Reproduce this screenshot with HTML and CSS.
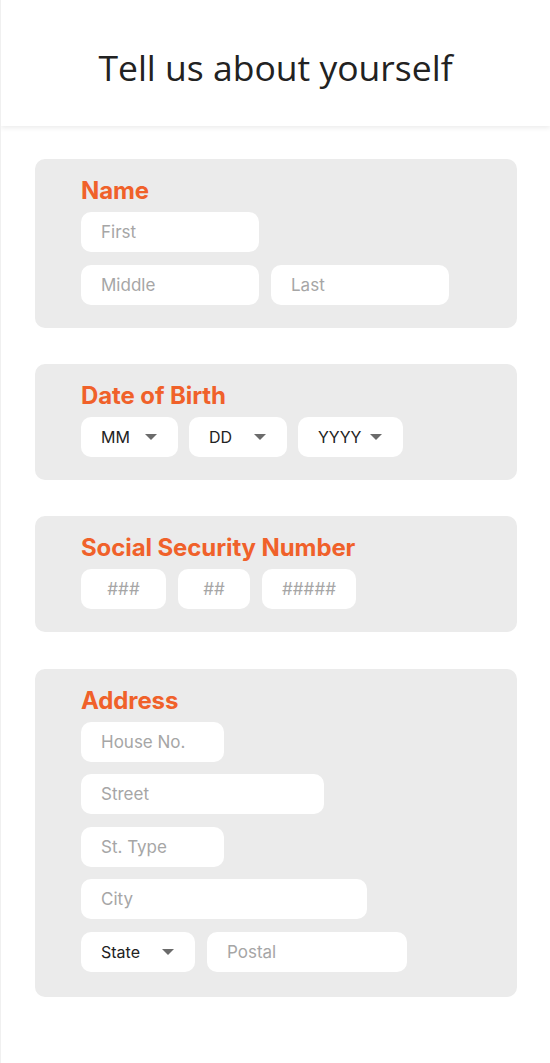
FILE: index.html
```html
<!DOCTYPE html>
<html lang="en">
<head>
    <meta charset="UTF-8">
    <meta name="viewport" content="width=device-width, initial-scale=1.0">
    <title>Tell us about yourself</title>
    <link rel="stylesheet" href="styles.css">
</head>
<body>
    <header class="topbar">
        <h1>Tell us about yourself</h1>
    </header>

    <main class="form">
        <section class="card">
            <h2 class="card-title">Name</h2>
            <div class="rows">
                <div class="row">
                    <input class="campo w-name" type="text" placeholder="First">
                </div>
                <div class="row">
                    <input class="campo w-name" type="text" placeholder="Middle">
                    <input class="campo w-name" type="text" placeholder="Last">
                </div>
            </div>
        </section>

        <section class="card">
            <h2 class="card-title">Date of Birth</h2>
            <div class="rows">
                <div class="row row-tight">
                    <div class="select w-month"><span>MM</span><span class="caret"></span></div>
                    <div class="select w-day"><span>DD</span><span class="caret"></span></div>
                    <div class="select w-year"><span>YYYY</span><span class="caret"></span></div>
                </div>
            </div>
        </section>

        <section class="card">
            <h2 class="card-title">Social Security Number</h2>
            <div class="rows">
                <div class="row">
                    <input class="campo centro w-ssn1" type="text" placeholder="###">
                    <input class="campo centro w-ssn2" type="text" placeholder="##">
                    <input class="campo centro w-ssn3" type="text" placeholder="#####">
                </div>
            </div>
        </section>

        <section class="card card-last">
            <h2 class="card-title">Address</h2>
            <div class="rows">
                <div class="row">
                    <input class="campo w-house" type="text" placeholder="House No.">
                </div>
                <div class="row">
                    <input class="campo w-street" type="text" placeholder="Street">
                </div>
                <div class="row">
                    <input class="campo w-house" type="text" placeholder="St. Type">
                </div>
                <div class="row">
                    <input class="campo w-city" type="text" placeholder="City">
                </div>
                <div class="row">
                    <div class="select w-state"><span>State</span><span class="caret"></span></div>
                    <input class="campo w-postal" type="text" placeholder="Postal">
                </div>
            </div>
        </section>
    </main>
</body>
</html>
```

FILE: styles.css
```css
body {
    margin: 0;
    background-color: #ffffff;
    border-left: 1px solid #f0f0f0;
    font-family: Inter, Roboto, sans-serif;
    min-height: 1063px;
    box-sizing: border-box;
}
.topbar {
    height: 126px;
    box-sizing: border-box;
    padding-top: 43px;
    background: #ffffff;
    box-shadow: 0 2px 5px rgba(0, 0, 0, 0.08);
    text-align: center;
}
.topbar h1 {
    margin: 0;
    font-family: "Open Sans", sans-serif;
    font-weight: 400;
    font-size: 35.5px;
    line-height: normal;
    color: #222222;
}
.form {
    display: flex;
    flex-direction: column;
    gap: 36px;
    padding: 33px 33px 0 34px;
}
.card {
    background: #ebebeb;
    border-radius: 10px;
    padding: 18px 46px 23px 46px;
}
.card-last {
    margin-top: 1px;
    padding-bottom: 25px;
}
.card-title {
    margin: 0 0 7px 0;
    font-size: 24px;
    font-weight: 700;
    line-height: 28px;
    color: #f0612a;
    letter-spacing: -0.1px;
}
.rows {
    display: flex;
    flex-direction: column;
    gap: 12.5px;
}
.row {
    display: flex;
    gap: 12px;
}
.row-tight {
    gap: 11px;
}
.campo {
    height: 40px;
    box-sizing: border-box;
    border: none;
    border-radius: 10px;
    background: #ffffff;
    padding: 0 20px;
    font-family: Inter, Roboto, sans-serif;
    font-size: 17px;
    color: #222222;
    outline: none;
}
.campo::placeholder {
    color: #a6a6a6;
}
.centro {
    text-align: center;
    padding: 0;
}
.select {
    height: 40px;
    box-sizing: border-box;
    border-radius: 10px;
    background: #ffffff;
    padding: 0 21px 0 20px;
    display: flex;
    align-items: center;
    justify-content: space-between;
    font-size: 16px;
    color: #222222;
}
.caret {
    width: 0;
    height: 0;
    border-left: 6px solid transparent;
    border-right: 6px solid transparent;
    border-top: 6px solid #6b6b6b;
}
.w-name { width: 178px; }
.w-month { width: 97px; }
.w-day { width: 98px; }
.w-year { width: 105px; }
.w-ssn1 { width: 85px; }
.w-ssn2 { width: 72px; }
.w-ssn3 { width: 94px; }
.w-house { width: 143px; }
.w-street { width: 243px; }
.w-city { width: 286px; }
.w-state { width: 114px; }
.w-postal { width: 200px; }
```
